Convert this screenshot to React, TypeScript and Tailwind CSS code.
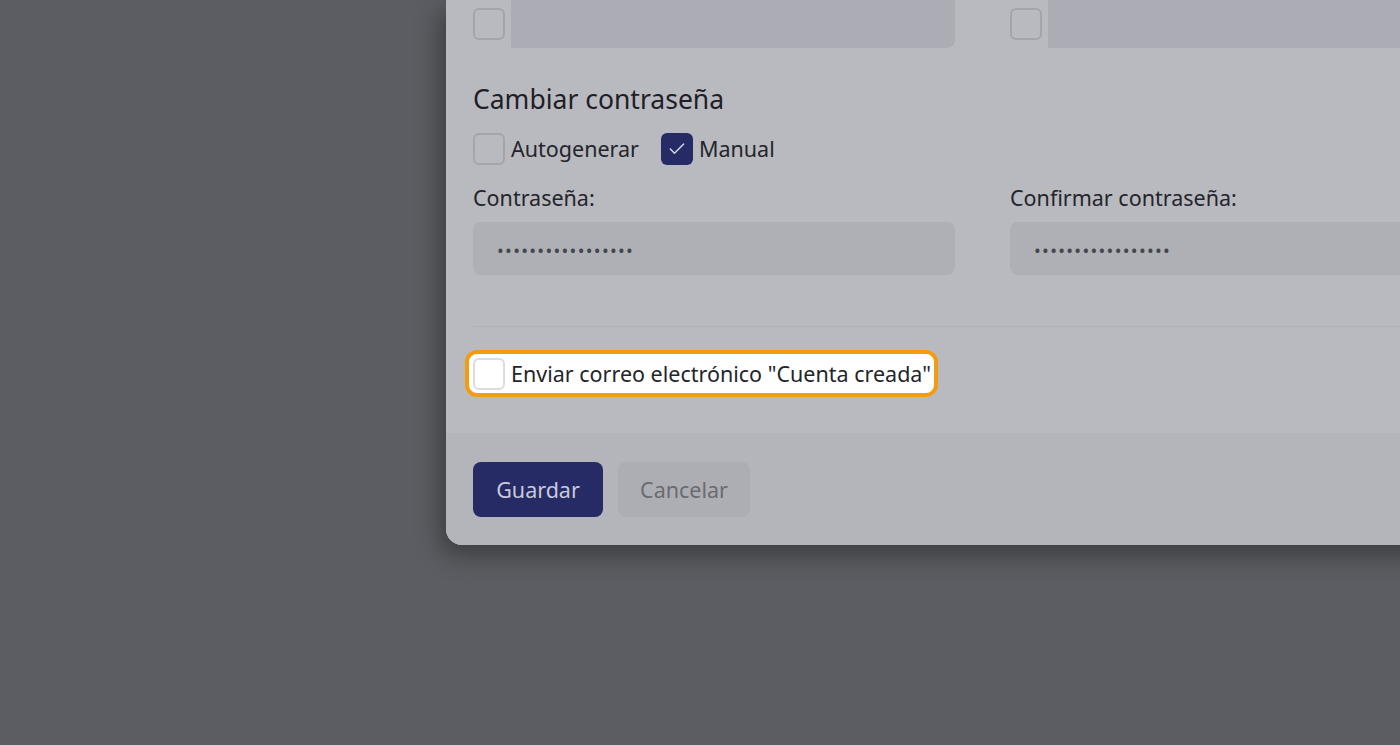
import { Check } from 'lucide-react'

const FONT = { fontFamily: '"Noto Sans", "Open Sans", sans-serif' }

function Box({ checked = false, white = false }: { checked?: boolean; white?: boolean }) {
  if (checked) {
    return (
      <span className="flex h-8 w-8 shrink-0 items-center justify-center rounded-md bg-[#262b66]">
        <Check size={20} strokeWidth={1.75} className="text-[#d8d9e6]" />
      </span>
    )
  }
  return (
    <span
      className={`h-8 w-8 shrink-0 rounded-md border-2 ${white ? 'border-[#dcdcdf] bg-white' : 'border-[#a4a5ab] bg-transparent'}`}
    />
  )
}

function TopField() {
  return (
    <div className="flex items-center">
      <Box />
      <div className="ml-[6px] h-12 flex-1 rounded-br-lg bg-[#acadb4]" />
    </div>
  )
}

function PasswordField({ label }: { label: string }) {
  return (
    <div>
      <div className="text-[21.5px] leading-[30px] text-[#24252b]">{label}</div>
      <div className="mt-[9px] flex h-[53px] items-center rounded-lg bg-[#afb0b6] px-6">
        <span className="mt-[4px] text-[18px] tracking-[1.3px] text-[#45464b]">•••••••••••••••••</span>
      </div>
    </div>
  )
}

export default function App() {
  return (
    <div className="h-[745px] w-full overflow-hidden bg-[#5c5d62]" style={FONT}>
      <div className="ml-[446px] w-[1073px] overflow-hidden rounded-bl-2xl bg-[#b9babf] shadow-[-6px_10px_24px_rgba(0,0,0,0.35)]">
        <div className="px-[27px] pb-9">
          <div className="grid grid-cols-2 gap-x-[55px]">
            <TopField />
            <TopField />
          </div>

          <h3 className="mt-[33px] text-[26.5px] leading-9 text-[#1f2026]">Cambiar contraseña</h3>

          <div className="mt-[16px] flex items-center gap-[22px] text-[21.5px] text-[#24252b]">
            <label className="flex items-center gap-[6px]">
              <Box />
              <span>Autogenerar</span>
            </label>
            <label className="flex items-center gap-[6px]">
              <Box checked />
              <span>Manual</span>
            </label>
          </div>

          <div className="mt-[18px] grid grid-cols-2 gap-x-[55px]">
            <PasswordField label="Contraseña:" />
            <PasswordField label="Confirmar contraseña:" />
          </div>

          <div className="mt-[51px] border-t border-[#b1b2b7]" />

          <div className="-ml-2 mt-[23px] inline-flex h-[47px] items-center gap-[6px] rounded-xl border-4 border-[#f39c12] bg-white pl-1 pr-[3px]">
            <Box white />
            <span className="text-[21.5px] text-[#24252b]">Enviar correo electrónico "Cuenta creada"</span>
          </div>
        </div>

        <div className="flex gap-[15px] bg-[#b4b5bb] px-[27px] pb-7 pt-[29px]">
          <button className="h-[55px] w-[130px] rounded-lg bg-[#262b66] text-[21.5px] text-[#c9cadb]">Guardar</button>
          <button className="h-[55px] w-[132px] rounded-lg bg-[#adaeb4] text-[21.5px] text-[#6a6b70]">Cancelar</button>
        </div>
      </div>
    </div>
  )
}
